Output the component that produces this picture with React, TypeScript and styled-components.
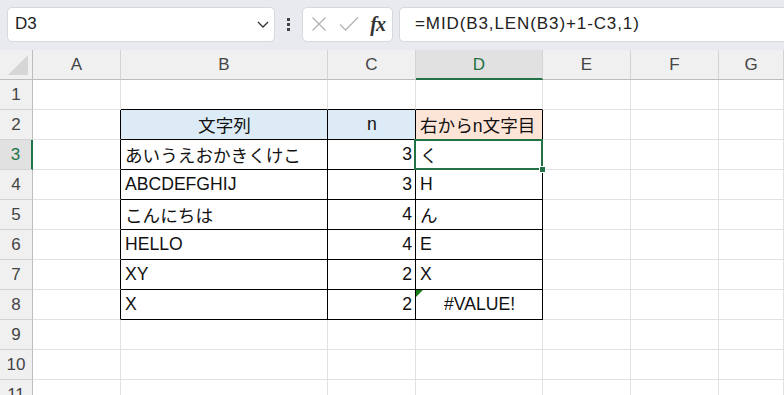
import React from "react";
import styled, { createGlobalStyle } from "styled-components";

const GlobalStyle = createGlobalStyle`
  html, body {
    margin: 0;
    padding: 0;
    background: #ffffff;
    overflow: hidden;
  }
  body {
    font-family: "Liberation Sans", "Noto Sans CJK JP", sans-serif;
  }
`;

const GREEN = "#217346";
const GRID = "#e1e1e1";
const BLACK = "#000000";

const Page = styled.div`
  width: 784px;
  height: 395px;
  overflow: hidden;
  background: #ffffff;
`;

const TopBar = styled.div`
  height: 50px;
  background: #e8eaef;
  display: flex;
  align-items: center;
  padding: 0 0 0 7px;
  box-sizing: border-box;
`;

const Box = styled.div<{ $width?: number; $open?: boolean }>`
  height: 35px;
  width: ${({ $width }) => ($width ? `${$width}px` : "auto")};
  flex: ${({ $width }) => ($width ? "none" : "1")};
  background: #ffffff;
  border: 1px solid #d6d8dc;
  border-right: ${({ $open }) => ($open ? "none" : "1px solid #d6d8dc")};
  border-radius: ${({ $open }) => ($open ? "5px 0 0 5px" : "5px")};
  box-sizing: border-box;
  display: flex;
  align-items: center;
  margin-top: -2px;
`;

const NameText = styled.span`
  flex: 1;
  padding-left: 7px;
  font-size: 17px;
  color: #222222;
`;

const Dots = styled.div`
  width: 27px;
  display: flex;
  flex-direction: column;
  align-items: center;
  gap: 2px;
  margin-top: -2px;

  span {
    width: 3px;
    height: 3px;
    background: #444444;
  }
`;

const FxButtons = styled(Box)`
  justify-content: space-between;
  padding: 0 7px 0 8px;
  margin-right: 6px;
`;

const FxLabel = styled.span`
  font-family: "Liberation Serif", serif;
  font-style: italic;
  font-weight: bold;
  font-size: 20px;
  color: #333333;
  letter-spacing: -1px;
`;

const FormulaText = styled.span`
  padding-left: 15px;
  font-size: 17px;
  letter-spacing: 0.9px;
  color: #222222;
  white-space: nowrap;
`;

const Sheet = styled.div`
  display: grid;
  grid-template-columns: 33px 88px 207px 88px 127px 88px 88px 1fr;
  grid-auto-rows: 30px;
`;

const ColHeader = styled.div<{ $sel?: boolean }>`
  box-sizing: border-box;
  background: ${({ $sel }) => ($sel ? "#e1e1e1" : "#f0f0f0")};
  border-right: 1px solid #d4d4d4;
  border-bottom: ${({ $sel }) => ($sel ? `2px solid ${GREEN}` : "1px solid #bdbdbd")};
  display: flex;
  align-items: center;
  justify-content: center;
  font-size: 17px;
  color: ${({ $sel }) => ($sel ? GREEN : "#444444")};
  padding-top: ${({ $sel }) => ($sel ? "1px" : "0")};
`;

const Corner = styled.div`
  box-sizing: border-box;
  background: #f0f0f0;
  border-right: 1px solid #bdbdbd;
  border-bottom: 1px solid #bdbdbd;
  display: flex;
  align-items: flex-end;
  justify-content: flex-end;
  padding: 0 4px 4px 0;
`;

const CornerTriangle = styled.div`
  width: 0;
  height: 0;
  border-left: 20px solid transparent;
  border-bottom: 20px solid #d6d6d6;
`;

const RowHeader = styled.div<{ $sel?: boolean }>`
  box-sizing: border-box;
  background: ${({ $sel }) => ($sel ? "#e1e1e1" : "#f0f0f0")};
  border-right: ${({ $sel }) => ($sel ? `2px solid ${GREEN}` : "1px solid #bdbdbd")};
  border-bottom: 1px solid #d4d4d4;
  display: flex;
  align-items: center;
  justify-content: center;
  font-size: 17px;
  color: ${({ $sel }) => ($sel ? GREEN : "#444444")};
`;

const Cell = styled.div<{
  $right?: string;
  $bottom?: string;
  $bg?: string;
  $align?: "left" | "center" | "right";
}>`
  position: relative;
  box-sizing: border-box;
  background: ${({ $bg }) => $bg || "#ffffff"};
  border-right: 1px solid ${({ $right }) => $right || GRID};
  border-bottom: 1px solid ${({ $bottom }) => $bottom || GRID};
  display: flex;
  align-items: center;
  justify-content: ${({ $align }) =>
    $align === "right" ? "flex-end" : $align === "center" ? "center" : "flex-start"};
  padding: 0 3px 0 4px;
  font-size: 17.6px;
  color: #111111;
  white-space: nowrap;
`;

const Selection = styled.div`
  position: absolute;
  z-index: 3;
  left: -2px;
  top: -1px;
  width: 129px;
  height: 31px;
  box-sizing: border-box;
  border: 2px solid ${GREEN};
  pointer-events: none;

  &::after {
    content: "";
    position: absolute;
    right: -5px;
    bottom: -5px;
    width: 5px;
    height: 5px;
    background: ${GREEN};
    border: 1px solid #ffffff;
  }
`;

const ErrorMark = styled.div`
  position: absolute;
  left: 0;
  top: 0;
  width: 0;
  height: 0;
  border-top: 7px solid #1a7f1a;
  border-right: 7px solid transparent;
`;

type Row = { b: string; c: string; d: string; dAlign?: "left" | "center" };

const rows: Row[] = [
  { b: "あいうえおかきくけこ", c: "3", d: "く" },
  { b: "ABCDEFGHIJ", c: "3", d: "H" },
  { b: "こんにちは", c: "4", d: "ん" },
  { b: "HELLO", c: "4", d: "E" },
  { b: "XY", c: "2", d: "X" },
  { b: "X", c: "2", d: "#VALUE!", dAlign: "center" },
];

const cols = ["A", "B", "C", "D", "E", "F", "G"];

const App: React.FC = () => {
  return (
    <Page>
      <GlobalStyle />
      <TopBar>
        <Box $width={268}>
          <NameText>D3</NameText>
          <svg width="14" height="14" viewBox="0 0 14 14" style={{ marginRight: 4 }}>
            <path d="M2 5 L7 10 L12 5" fill="none" stroke="#333" strokeWidth="1.3" />
          </svg>
        </Box>
        <Dots>
          <span />
          <span />
          <span />
        </Dots>
        <FxButtons $width={91}>
          <svg width="16" height="16" viewBox="0 0 16 16">
            <path d="M1.5 1.5 L14.5 14.5 M14.5 1.5 L1.5 14.5" stroke="#b4b4b4" strokeWidth="1.3" fill="none" />
          </svg>
          <svg width="20" height="16" viewBox="0 0 20 16">
            <path d="M1 8.5 L6.5 14 L19 1.5" stroke="#b4b4b4" strokeWidth="1.3" fill="none" />
          </svg>
          <FxLabel>fx</FxLabel>
        </FxButtons>
        <Box $open>
          <FormulaText>=MID(B3,LEN(B3)+1-C3,1)</FormulaText>
        </Box>
      </TopBar>

      <Sheet>
        <Corner>
          <CornerTriangle />
        </Corner>
        {cols.map((c) => (
          <ColHeader key={c} $sel={c === "D"}>
            {c}
          </ColHeader>
        ))}

        {/* row 1 */}
        <RowHeader>1</RowHeader>
        <Cell />
        <Cell $bottom={BLACK} />
        <Cell $bottom={BLACK} />
        <Cell $bottom={BLACK} />
        <Cell />
        <Cell />
        <Cell />

        {/* row 2: table header */}
        <RowHeader>2</RowHeader>
        <Cell $right={BLACK} />
        <Cell $right={BLACK} $bottom={BLACK} $bg="#ddebf7" $align="center">
          文字列
        </Cell>
        <Cell $right={BLACK} $bottom={BLACK} $bg="#ddebf7" $align="center">
          n
        </Cell>
        <Cell $right={BLACK} $bottom={BLACK} $bg="#fce4d6">
          右からn文字目
        </Cell>
        <Cell />
        <Cell />
        <Cell />

        {rows.map((r, i) => {
          const n = i + 3;
          return (
            <React.Fragment key={n}>
              <RowHeader $sel={n === 3}>{n}</RowHeader>
              <Cell $right={BLACK} />
              <Cell $right={BLACK} $bottom={BLACK}>
                {r.b}
              </Cell>
              <Cell $right={BLACK} $bottom={BLACK} $align="right">
                {r.c}
              </Cell>
              <Cell $right={BLACK} $bottom={BLACK} $align={r.dAlign}>
                {n === 8 && <ErrorMark />}
                {r.d}
                {n === 3 && <Selection />}
              </Cell>
              <Cell />
              <Cell />
              <Cell />
            </React.Fragment>
          );
        })}

        {[9, 10, 11].map((n) => (
          <React.Fragment key={n}>
            <RowHeader>{n}</RowHeader>
            <Cell />
            <Cell />
            <Cell />
            <Cell />
            <Cell />
            <Cell />
            <Cell />
          </React.Fragment>
        ))}
      </Sheet>
    </Page>
  );
};

export default App;
